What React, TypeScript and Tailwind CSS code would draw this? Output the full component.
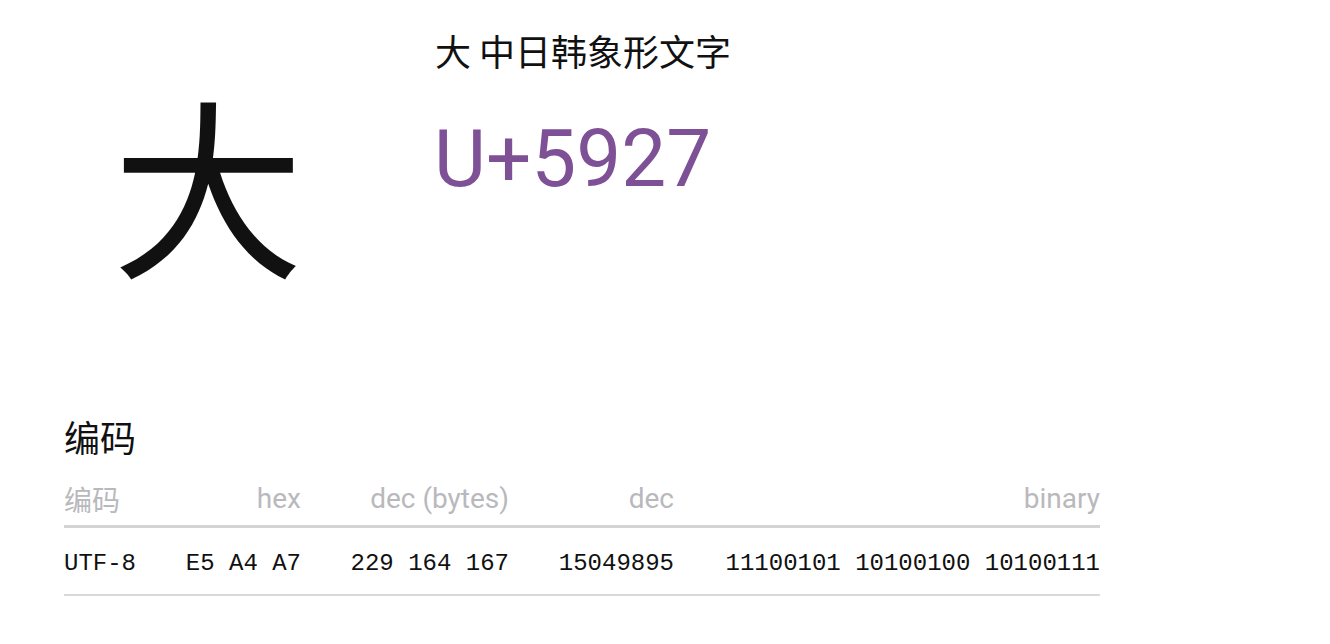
import React from "react";

const cjk = "font-['Noto_Sans_CJK_SC',sans-serif]";
const roboto = "font-['Roboto','Noto_Sans_CJK_SC',sans-serif]";
const mono = "font-['Liberation_Mono','Courier_New',monospace]";

const rows = [
  {
    name: "UTF-8",
    hex: "E5 A4 A7",
    bytes: "229 164 167",
    dec: "15049895",
    binary: "11100101 10100100 10100111",
  },
];

const App = () => {
  return (
    <div className="w-[1330px] h-[644px] bg-white overflow-hidden">
      <div className="flex">
        <div className="w-[435px] h-[412px] pl-[112px] pt-[84px]">
          <div className={`${cjk} text-[192px] leading-none text-[#111]`}>大</div>
        </div>
        <div className="pt-[26px]">
          <h1 className={`${cjk} text-[36px] leading-[48px] text-[#111]`}>大 中日韩象形文字</h1>
          <div className={`${roboto} text-[80px] leading-none text-[#7e5096] mt-[45px] -ml-[1px]`}>U+5927</div>
        </div>
      </div>

      <div className="pl-[64px]">
        <h2 className={`${cjk} text-[36px] leading-[48px] text-[#111]`}>编码</h2>
        <div className="w-[1036px] mt-[19px]">
          <div className={`grid grid-cols-[106px_131px_208px_165px_426px] ${roboto} text-[28px] text-[#b9b9bd] leading-[40px] pb-[6px] border-b-[3px] border-[#d4d4d4]`}>
            <div className={cjk}>编码</div>
            <div className="text-right">hex</div>
            <div className="text-right">dec (bytes)</div>
            <div className="text-right">dec</div>
            <div className="text-right">binary</div>
          </div>
          {rows.map((r) => (
            <div
              key={r.name}
              className={`grid grid-cols-[106px_131px_208px_165px_426px] ${mono} text-[24px] text-[#111] leading-[32px] pt-[20px] pb-[14px] border-b-2 border-[#d9d9d9]`}
            >
              <div>{r.name}</div>
              <div className="text-right">{r.hex}</div>
              <div className="text-right">{r.bytes}</div>
              <div className="text-right">{r.dec}</div>
              <div className="text-right">{r.binary}</div>
            </div>
          ))}
        </div>
      </div>
    </div>
  );
};

export default App;
